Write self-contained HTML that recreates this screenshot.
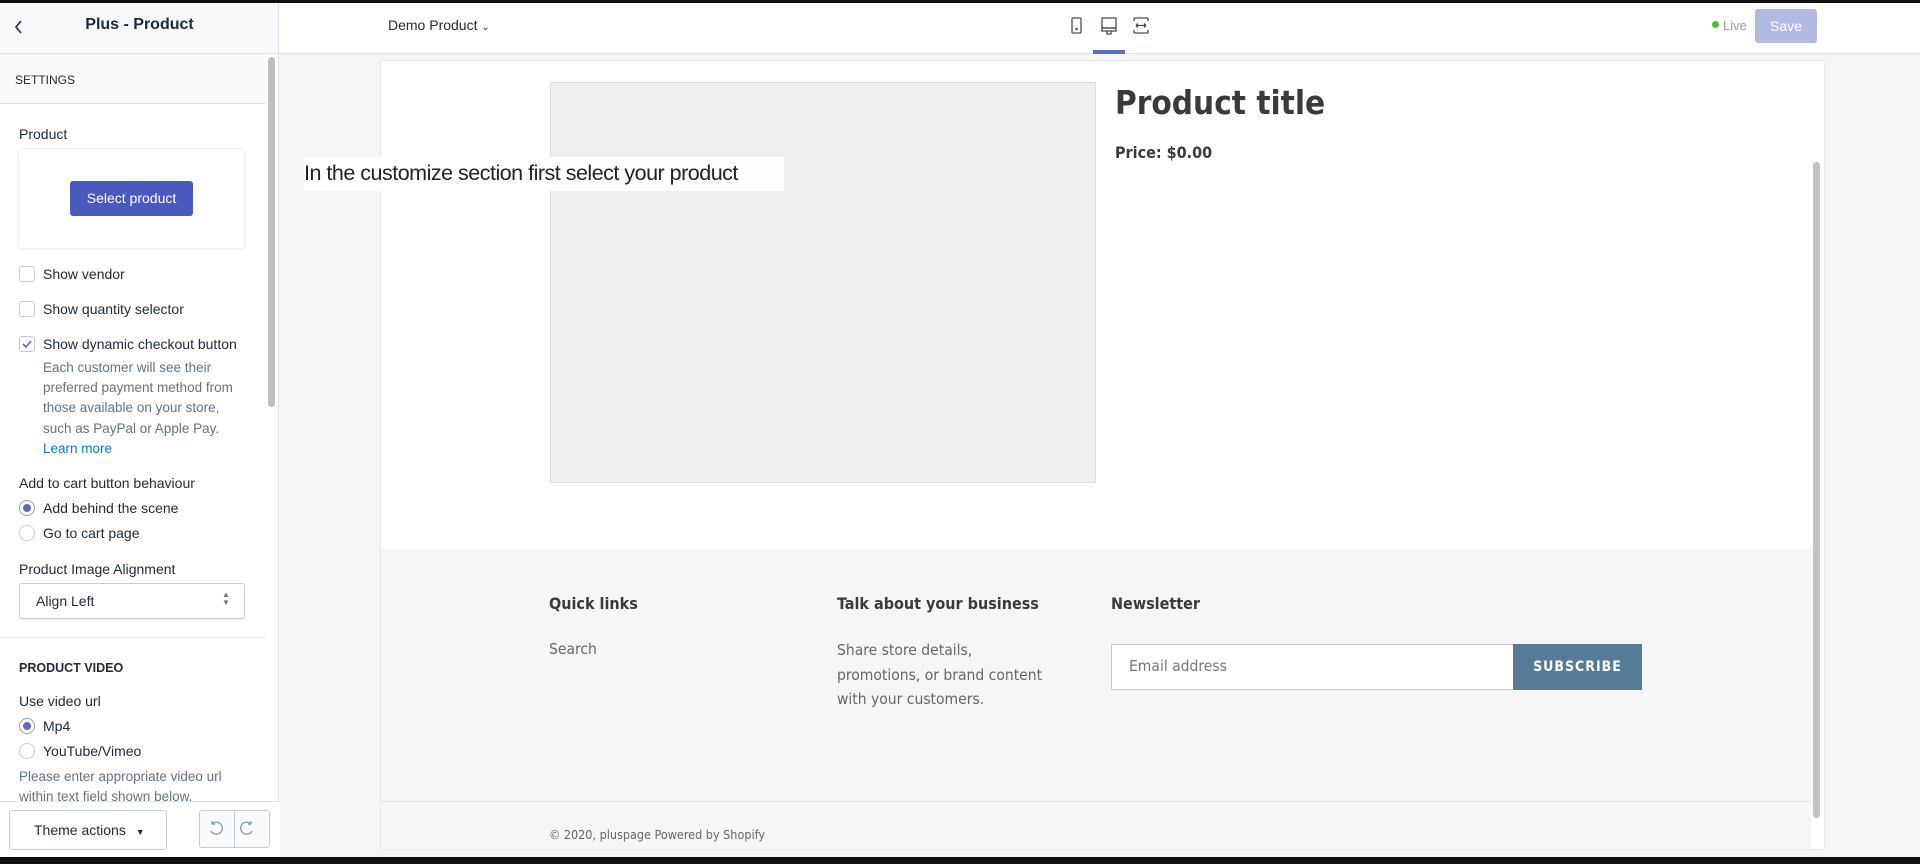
<!DOCTYPE html>
<html><head><meta charset="utf-8"><style>
*{box-sizing:border-box;margin:0;padding:0}
body{width:1920px;height:864px;overflow:hidden;background:#f4f6f8;font-family:"Liberation Sans",sans-serif;color:#212b36;position:relative}
.a{position:absolute}
.t{font-size:14px;color:#212b36;white-space:nowrap}
.cb{position:absolute;width:16px;height:16px;border:1px solid #c4cdd5;border-radius:3px;background:#fff}
.rd{position:absolute;width:16px;height:16px;border:1px solid #c4cdd5;border-radius:50%;background:#fff}
.rd.on::after{content:"";position:absolute;left:3px;top:3px;width:8px;height:8px;border-radius:50%;background:#5c6ac4}
.rd.on{border-color:#919eab}
.g{color:#637381}
.ft{font-family:"DejaVu Sans Condensed","Liberation Sans",sans-serif}
</style></head><body>
<div class="a" style="left:0;top:0;width:1920px;height:3px;background:#111"></div>
<div class="a" style="left:0;top:3px;width:1920px;height:51px;background:#fff;border-bottom:1px solid #dfe3e8"></div>
<div class="a" style="left:0;top:3px;width:279px;height:51px;background:#f9fafb;border-right:1px solid #dfe3e8;border-bottom:1px solid #dfe3e8"></div>
<svg class="a" style="left:13px;top:19px" width="12" height="16"><path d="M8 2 L3 8 L8 14" stroke="#212b36" stroke-width="1.6" fill="none"/></svg>
<div class="a" style="left:0;width:279px;top:16px;text-align:center;font-size:16px;font-weight:bold;color:#212b36">Plus - Product</div>
<div class="a t" style="left:388px;top:17px;font-size:14px">Demo Product <span style="font-size:10px">&#8964;</span></div>
<svg class="a" style="left:1070px;top:16px" width="80" height="22" fill="none" stroke="#454f5b" stroke-width="1.3">
<rect x="2" y="2" width="9" height="15" rx="1"/><circle cx="6.5" cy="13" r=".6" fill="#454f5b"/>
<rect x="32" y="2" width="14" height="10"/><path d="M32 12h14v3H32zM37 15v3h4v-3"/>
<path d="M64 2v3M64 14v3M64 2h14M64 17h14M78 2v3M78 14v3M66 9.5h10M66 9.5l2-2M66 9.5l2 2M76 9.5l-2-2M76 9.5l-2 2"/>
</svg>
<div class="a" style="left:1093px;top:50px;width:32px;height:4px;background:#5c6ac4"></div>
<div class="a" style="left:1712px;top:21px;width:7px;height:7px;border-radius:50%;background:#50b83c"></div>
<div class="a" style="left:1723px;top:18px;font-size:13px;color:#919eab">Live</div>
<div class="a" style="left:1755px;top:9px;width:62px;height:34px;border-radius:3px;color:#fff;font-size:14px;text-align:center;line-height:34px;background:#b4b9e3">Save</div>
<div class="a" style="left:0;top:55px;width:279px;height:802px;background:#fff;border-right:1px solid #dfe3e8"></div>
<div class="a" style="left:0;top:55px;width:266px;height:49px;background:#f9fafb;border-bottom:1px solid #dfe3e8"></div>
<div class="a" style="left:15px;top:73px;font-size:12px;color:#212b36">SETTINGS</div>
<div class="a" style="left:268px;top:57px;width:7px;height:350px;background:#bfbfbf;border-radius:4px"></div>
<div class="a t" style="left:19px;top:126px">Product</div>
<div class="a" style="left:18px;top:148px;width:227px;height:101px;border:1px solid #f1f2f4;border-radius:3px;box-shadow:0 1px 2px rgba(0,0,0,.06)"></div>
<div class="a" style="left:70px;top:181px;width:123px;height:35px;background:#4959bd;border-radius:3px;color:#fff;font-size:14px;text-align:center;line-height:35px">Select product</div>
<div class="cb" style="left:19px;top:266px"></div><div class="a t" style="left:43px;top:266px">Show vendor</div>
<div class="cb" style="left:19px;top:301px"></div><div class="a t" style="left:43px;top:301px">Show quantity selector</div>
<div class="cb" style="left:19px;top:336px"><svg width="14" height="14" style="position:absolute;left:0;top:0"><path d="M3 7l3 3 5-6" stroke="#5c6ac4" stroke-width="1.6" fill="none"/></svg></div><div class="a t" style="left:43px;top:336px">Show dynamic checkout button</div>
<div class="a g" style="left:43px;top:358px;font-size:13.5px;line-height:20.2px">Each customer will see their<br>preferred payment method from<br>those available on your store,<br>such as PayPal or Apple Pay.<br><span style="color:#007ace">Learn more</span></div>
<div class="a t" style="left:19px;top:475px">Add to cart button behaviour</div>
<div class="rd on" style="left:19px;top:500px"></div><div class="a t" style="left:43px;top:500px">Add behind the scene</div>
<div class="rd" style="left:19px;top:525px"></div><div class="a t" style="left:43px;top:525px">Go to cart page</div>
<div class="a t" style="left:19px;top:561px">Product Image Alignment</div>
<div class="a" style="left:19px;top:583px;width:226px;height:36px;border:1px solid #c4cdd5;border-radius:3px;box-shadow:0 1px 1px rgba(0,0,0,.05)"></div>
<div class="a t" style="left:36px;top:593px">Align Left</div>
<div class="a" style="left:222px;top:591px;font-size:8px;line-height:8px;color:#637381">▲<br>▼</div>
<div class="a" style="left:0;top:637px;width:266px;height:1px;background:#ebeef0"></div>
<div class="a" style="left:19px;top:661px;font-size:12.5px;font-weight:bold">PRODUCT VIDEO</div>
<div class="a t" style="left:19px;top:693px">Use video url</div>
<div class="rd on" style="left:19px;top:718px"></div><div class="a t" style="left:43px;top:718px">Mp4</div>
<div class="rd" style="left:19px;top:743px"></div><div class="a t" style="left:43px;top:743px">YouTube/Vimeo</div>
<div class="a g" style="left:19px;top:767px;font-size:13.5px;line-height:20px">Please enter appropriate video url<br>within text field shown below.</div>
<div class="a" style="left:0;top:801px;width:280px;height:56px;background:#fff;border-top:1px solid #dfe3e8"></div>
<div class="a" style="left:9px;top:810px;width:158px;height:40px;border:1px solid #c4cdd5;border-radius:3px;font-size:14px;line-height:38px;padding-left:24px">Theme actions <span style="font-size:9px;margin-left:6px">▼</span></div>
<div class="a" style="left:199px;top:810px;width:71px;height:38px;border:1px solid #c4cdd5;border-radius:3px;background:#f9fafb"></div>
<div class="a" style="left:234px;top:810px;width:1px;height:38px;background:#c4cdd5"></div>
<svg class="a" style="left:206px;top:820px" width="60" height="18" fill="none" stroke="#919eab" stroke-width="1.4"><path d="M6 4a6 6 0 1 1-1 7M6 4V1M6 4h3"/><path d="M45 4a6 6 0 1 0 1 7M45 4V1M45 4h-3"/></svg>
<div class="a" style="left:381px;top:61px;width:1443px;height:788px;background:#fff;box-shadow:0 0 2px rgba(0,0,0,.15)"></div>
<div class="a" style="left:550px;top:82px;width:546px;height:401px;background:#efefef;border:1px solid #dcdcdc"></div>
<div class="a ft" style="left:1115px;top:83px;font-size:33px;font-weight:bold;color:#3a3a3a">Product title</div>
<div class="a ft" style="left:1115px;top:143px;font-size:16px;font-weight:bold;color:#3a3a3a">Price: $0.00</div>
<div class="a" style="left:381px;top:549px;width:1430px;height:300px;background:#f6f6f6"></div>
<div class="a" style="left:381px;top:801px;width:1430px;height:1px;background:#e0e0e0"></div>
<div class="a ft" style="left:549px;top:594px;font-size:16px;font-weight:bold;color:#3a3a3a">Quick links</div>
<div class="a ft" style="left:837px;top:594px;font-size:16px;font-weight:bold;color:#3a3a3a">Talk about your business</div>
<div class="a ft" style="left:1111px;top:594px;font-size:16px;font-weight:bold;color:#3a3a3a">Newsletter</div>
<div class="a ft" style="left:549px;top:640px;font-size:15.5px;color:#666">Search</div>
<div class="a ft" style="left:837px;top:638px;font-size:15.5px;line-height:24.5px;color:#666">Share store details,<br>promotions, or brand content<br>with your customers.</div>
<div class="a" style="left:1111px;top:644px;width:403px;height:46px;background:#fff;border:1px solid #c8c8c8"></div>
<div class="a ft" style="left:1129px;top:657px;font-size:15.5px;color:#777">Email address</div>
<div class="a ft" style="left:1513px;top:644px;width:129px;height:46px;background:#557b97;color:#fff;font-weight:bold;font-size:14px;letter-spacing:1px;text-align:center;line-height:46px">SUBSCRIBE</div>
<div class="a ft" style="left:549px;top:827px;font-size:12.5px;color:#666">© 2020, pluspage Powered by Shopify</div>
<div class="a" style="left:1813px;top:162px;width:7px;height:656px;background:#c1c1c1;border-radius:4px"></div>
<div class="a" style="left:304px;top:157px;width:480px;height:34px;background:rgba(255,255,255,.92)"></div>
<div class="a" style="left:304px;top:161px;font-size:21.5px;color:#222;letter-spacing:-0.5px">In the customize section first select your product</div>
<div class="a" style="left:0;top:857px;width:1920px;height:7px;background:#111"></div>
</body></html>
